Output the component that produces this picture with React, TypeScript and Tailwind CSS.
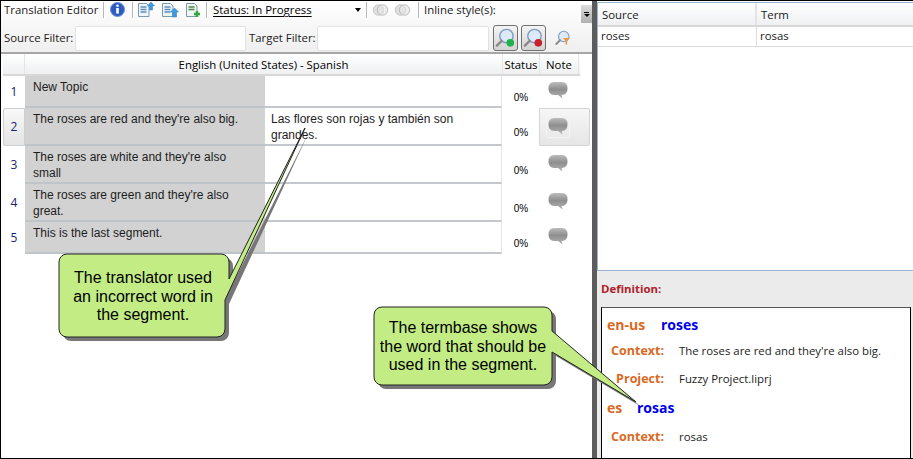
const ui = { fontFamily: '"Open Sans", "Noto Sans", sans-serif' }
const arial = { fontFamily: '"Liberation Sans", sans-serif' }

function Sep() {
  return <div className="w-px h-[16px] bg-[#b8b8b8] border-r border-white box-content" />
}

function InfoIcon() {
  return (
    <svg width="15" height="15" viewBox="0 0 15 15">
      <circle cx="7.5" cy="7.5" r="7" fill="#2d5cc0" stroke="#6f8fd8" />
      <circle cx="7.5" cy="3.8" r="1.3" fill="#fff" />
      <rect x="6.2" y="6" width="2.6" height="5.6" fill="#fff" />
    </svg>
  )
}

function DocIcon({ kind }: { kind: 'up' | 'down' | 'plus' }) {
  return (
    <svg width="18" height="17" viewBox="0 0 18 17">
      <path d="M1.5 2.5h8l2.5 2.5v10.5h-10.5z" fill="#eef4f8" stroke="#7d9aa8" />
      {kind === 'plus' ? (
        <>
          <path d="M3.5 6h6M3.5 8.5h6" stroke="#4d8a3c" strokeWidth="1.5" />
          <path d="M12 10v6M9 13h6" stroke="#35a83a" strokeWidth="2.5" />
        </>
      ) : (
        <>
          <path d="M3.5 6h6M3.5 8.5h6M3.5 11h6" stroke="#5d90bf" strokeWidth="1.5" />
          <path d={kind === 'up' ? 'M14 1l3.5 4h-2v4h-3v-4h-2z' : 'M13.5 7l4 4h-2v5h-4v-5h-2z'} fill="#3d9be0" stroke="#2a78b8" strokeWidth="0.5" />
        </>
      )}
    </svg>
  )
}

function SearchIcon({ dot }: { dot: string }) {
  return (
    <svg width="24" height="24" viewBox="0 0 24 24">
      <circle cx="13" cy="10" r="7" fill="#dfeaf8" stroke="#7c9cc8" strokeWidth="1.5" />
      <path d="M8 15l-5 5" stroke="#8a8a8a" strokeWidth="2.5" strokeLinecap="round" />
      {dot === 'orange' ? (
        <path d="M12 12h9l-3.5 4v5h-2v-5z" fill="#e89a3c" />
      ) : (
        <circle cx="17" cy="17" r="4" fill={dot} />
      )}
    </svg>
  )
}

function Bubble() {
  return (
    <svg width="20" height="18" viewBox="0 0 20 18">
      <defs>
        <linearGradient id="bubble" x1="0" y1="0" x2="0" y2="1">
          <stop offset="0" stopColor="#bcbcbc" />
          <stop offset="0.45" stopColor="#8e8e8e" />
          <stop offset="1" stopColor="#b4b4b4" />
        </linearGradient>
      </defs>
      <path d="M6 1h8q5.500 0 5.500 6.500t-5.500 6.500h-.5l1 3.500-4.500-3.500h-4q-5.500 0-5.500-6.500t5.500-6.500z" fill="url(#bubble)" />
    </svg>
  )
}

function Circles() {
  return (
    <svg width="17" height="12" viewBox="0 0 17 12">
      <circle cx="6.5" cy="6" r="5.200" fill="#e0e0e0" stroke="#c4c4c4" />
      <circle cx="10.500" cy="6" r="5.200" fill="#e4e4e4" fillOpacity="0.6" stroke="#bcbcbc" />
    </svg>
  )
}

const rows = [
  { n: 1, h: 'h-[32px]', source: 'New Topic', target: '' },
  { n: 2, h: 'h-[38px]', source: "The roses are red and they're also big.", target: 'Las flores son rojas y también son grandes.' },
  { n: 3, h: 'h-[38px]', source: "The roses are white and they're also small", target: '' },
  { n: 4, h: 'h-[38px]', source: "The roses are green and they're also great.", target: '' },
  { n: 5, h: 'h-[32px]', source: 'This is the last segment.', target: '' },
]

function Callout({ className, w, h, text, tail, children }: {
  className: string; w: number; h: number; text: { x: number; y: number; w: number }; tail: string; children: React.ReactNode
}) {
  return (
    <div className={'absolute ' + className}>
      <svg width={w} height={h} viewBox={`0 0 ${w} ${h}`} className="block">
        <path d={tail} fill="#777" transform="translate(4 4)" />
        <path d={tail} fill="#c3ec85" stroke="#222" strokeWidth="1" />
      </svg>
      <div className="absolute text-center text-black leading-[18.5px] text-[16px]" style={{ left: text.x, top: text.y, width: text.w, ...arial }}>
        {children}
      </div>
    </div>
  )
}

export default function App() {
  return (
    <div className="relative w-[913px] h-[459px] overflow-hidden bg-white text-[11.4px] text-[#1a1a1a] flex border-t-[1px] border-b-[1px] border-l-[1px] border-black" style={ui}>
      {/* left panel */}
      <div className="w-[591px] shrink-0 flex flex-col">
        <div className="h-[51px] shrink-0 bg-gradient-to-b from-white to-[#efefef] border-b-2 border-[#a6a6a6] relative box-content">
          <div className="h-[23px] flex items-center pl-[3px] pb-[6px]">
            <span className="w-[96px] whitespace-nowrap">Translation Editor</span>
            <div className="ml-[3px]"><Sep /></div>
            <div className="ml-[5px]"><InfoIcon /></div>
            <div className="ml-[7px]"><Sep /></div>
            <div className="ml-[3px] flex gap-[6px]">
              <DocIcon kind="up" />
              <DocIcon kind="down" />
              <DocIcon kind="plus" />
            </div>
            <div className="ml-[3px]"><Sep /></div>
            <span className="ml-[5px] w-[142px] underline underline-offset-2 whitespace-nowrap text-black">Status: In Progress</span>
            <span className="w-0 h-0 border-x-[3px] border-x-transparent border-t-[4px] border-t-black" />
            <div className="ml-[5px]"><Sep /></div>
            <div className="ml-[4px] flex gap-[5px]"><Circles /><Circles /></div>
            <div className="ml-[7px]"><Sep /></div>
            <span className="ml-[4px] whitespace-nowrap">Inline style(s):</span>
            <div className="ml-auto mt-[9px] w-[11px] h-[18px] bg-gradient-to-b from-[#dcdcdc] to-[#b0b0b0] flex flex-col items-center justify-center gap-[1px]">
              <span className="w-[5px] h-px bg-black" />
              <span className="w-0 h-0 border-x-[3px] border-x-transparent border-t-[3px] border-t-black" />
            </div>
          </div>
          <div className="h-[28px] flex items-center pl-[3px]">
            <span className="w-[71px] whitespace-nowrap">Source Filter:</span>
            <div className="w-[171px] h-[25px] bg-white border border-[#e2e2e2] rounded-[2px]" />
            <span className="ml-[3px] w-[68px] whitespace-nowrap">Target Filter:</span>
            <div className="w-[172px] h-[25px] bg-white border border-[#e2e2e2] rounded-[2px]" />
            <button className="ml-[4px] w-[25px] h-[26px] border border-[#707070] rounded-[3px] bg-gradient-to-b from-[#f4f4f4] to-[#d4d4d4] flex items-center justify-center">
              <SearchIcon dot="#22b14c" />
            </button>
            <button className="ml-[3px] w-[25px] h-[26px] border border-[#707070] rounded-[3px] bg-gradient-to-b from-[#f4f4f4] to-[#d4d4d4] flex items-center justify-center">
              <SearchIcon dot="#c8202a" />
            </button>
            <div className="ml-[5px] scale-75"><SearchIcon dot="orange" /></div>
          </div>
        </div>

        {/* grid */}
        <div className="pl-[2px] pr-[12px] flex-1">
          <div className="h-[22px] flex bg-gradient-to-b from-white to-[#eef0f2] border-b-2 border-[#d8d8d8] text-black">
            <div className="w-[22px] border-r border-[#e4e4e4]" />
            <div className="w-[477px] text-center leading-[21px]">English (United States) - Spanish</div>
            <div className="w-[38px] text-center leading-[21px] border-x border-[#e4e4e4]">Status</div>
            <div className="w-[39px] text-center leading-[21px] border-r border-[#e4e4e4]">Note</div>
          </div>
          {rows.map((r) => (
            <div key={r.n} className={'relative flex ' + r.h}>
              {r.n === 2 && (
                <>
                  <div className="absolute left-0 top-0 w-[22px] h-full bg-gradient-to-b from-[#f8f8f8] to-[#e4e4e4] border border-[#cfcfcf] rounded-l-[2px]" />
                  <div className="absolute left-[536px] top-0 w-[51px] h-full bg-gradient-to-b from-[#f6f6f6] to-[#e6e6e6] border border-[#d4d4d4] rounded-r-[2px]" />
                </>
              )}
              <div className="relative w-[22px] flex items-center justify-center text-[12px] text-[#14246e]">{r.n}</div>
              <div className="w-[240px] bg-[#d2d2d2] border-b-2 border-[#bfc4c9] pl-[8px] pr-[14px] pt-[3px] leading-[16px] text-[12px] text-[#1d1d1d]" style={arial}>
                {r.source}
              </div>
              <div className="w-[237px] bg-white border-b-2 border-r border-[#c4c8cc] border-r-[#e4e6ea] pl-[6px] pr-[20px] pt-[3px] leading-[16px] text-[12px] text-[#1d1d1d]" style={arial}>
                {r.target}
              </div>
              <div className="w-[38px] flex items-center justify-center pt-[10px] text-[10px] text-black" style={arial}>0%</div>
              <div className="relative w-[39px] flex items-center justify-center pb-[4px] pr-[3px]">
                {r.n === 2 ? (
                  <div className="w-[24px] h-[24px] mt-[2px] border border-[#f4f4f4] rounded-[2px] flex items-center justify-center"><Bubble /></div>
                ) : (
                  <Bubble />
                )}
              </div>
            </div>
          ))}
        </div>
      </div>

      {/* splitter */}
      <div className="w-[5px] shrink-0 bg-[#5c5c5c]" />

      {/* right panel */}
      <div className="flex-1 flex flex-col min-w-0">
        <div className="h-[269px] shrink-0 border-l border-t border-b border-[#9db4d0] mt-[1px] bg-white">
          <div className="h-[24px] flex bg-gradient-to-b from-white to-[#eef0f2] border-b-2 border-[#d8d8d8] leading-[23px]">
            <div className="w-[159px] pl-[4px] border-r-2 border-[#e4e4e4]">Source</div>
            <div className="pl-[4px]">Term</div>
          </div>
          <div className="h-[20px] flex border-b border-[#dcdcdc] leading-[18px]">
            <div className="w-[159px] pl-[3px] border-r border-[#dcdcdc]">roses</div>
            <div className="pl-[3px]">rosas</div>
          </div>
        </div>
        <div className="flex-1 bg-[#ebebeb] pl-[4px] pr-[2px] flex flex-col min-h-0">
          <div className="h-[36px] flex items-center font-bold text-[#b02028]">Definition:</div>
          <div className="flex-1 bg-white border border-black border-b-0 border-t-[#555] pl-[5px] pt-[4px] text-[#222] overflow-hidden">
            <div className="flex items-center h-[24px] font-bold text-[14px]">
              <span className="w-[54px] text-[#d9691f]">en-us</span>
              <span className="text-[#0000f0]">roses</span>
            </div>
            <div className="flex items-center h-[28px] mt-[1px]">
              <span className="w-[57px] mr-[15px] text-right font-bold text-[12.5px] text-[#d9691f]">Context:</span>
              <span>The roses are red and they're also big.</span>
            </div>
            <div className="flex items-center h-[28px]">
              <span className="w-[57px] mr-[15px] text-right font-bold text-[12.5px] text-[#d9691f]">Project:</span>
              <span>Fuzzy Project.liprj</span>
            </div>
            <div className="flex items-center h-[24px] mt-[2px] font-bold text-[14px]">
              <span className="w-[30px] text-[#d9691f]">es</span>
              <span className="text-[#0000f0]">rosas</span>
            </div>
            <div className="flex items-center h-[32px] mt-[2px]">
              <span className="w-[57px] mr-[15px] text-right font-bold text-[12.5px] text-[#d9691f]">Context:</span>
              <span>rosas</span>
            </div>
          </div>
        </div>
      </div>

      {/* callouts */}
      <Callout
        className="left-[57px] top-[126px]"
        w={260}
        h={220}
        text={{ x: 2, y: 142, w: 166 }}
        tail="M11 127h152a8 8 0 0 1 8 8V152L247 1 L167 173V202a8 8 0 0 1-8 8H9a8 8 0 0 1-8-8V135a8 8 0 0 1 8-8z"
      >
        <>The translator used<br />an incorrect word in<br />the segment.</>
      </Callout>
      <Callout
        className="left-[372px] top-[305px]"
        w={280}
        h={110}
        text={{ x: 1, y: 13, w: 178 }}
        tail="M9 1H171a8 8 0 0 1 8 8V25L263 96 179 46V71a8 8 0 0 1-8 8H9a8 8 0 0 1-8-8V9a8 8 0 0 1 8-8z"
      >
        <>The termbase shows<br />the word that should be<br />used in the segment.</>
      </Callout>
    </div>
  )
}
